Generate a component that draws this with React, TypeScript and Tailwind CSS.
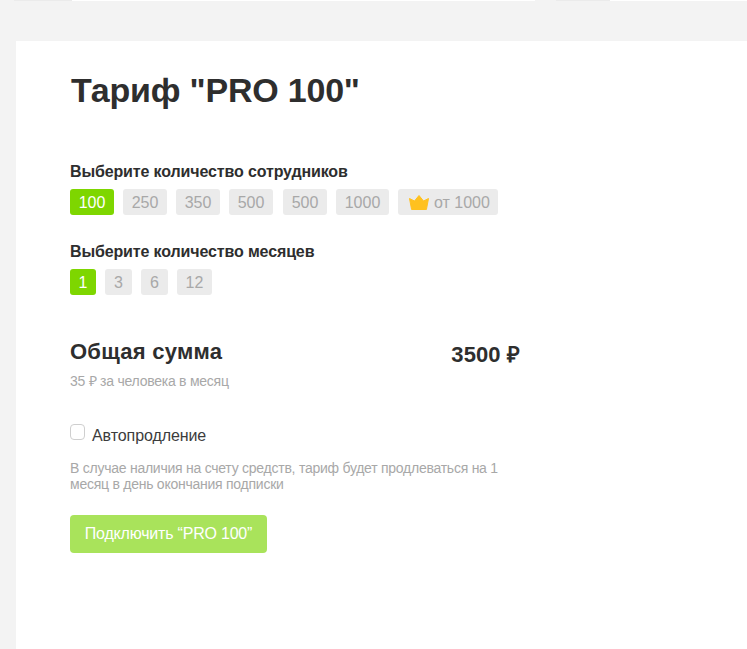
const employees = ['100', '250', '350', '500', '500', '1000'];
const months = ['1', '3', '6', '12'];

function Chip({ label, active, className = '' }: { label: string; active?: boolean; className?: string }) {
  return (
    <div
      className={[
        'h-[26px] flex items-center justify-center rounded-[3px] pt-px text-[16px] leading-none',
        active ? 'bg-[#7ed600] text-white' : 'bg-[#ebebeb] text-[#a8a8a8]',
        className,
      ].join(' ')}
    >
      {label}
    </div>
  );
}

function Crown() {
  return (
    <svg width="20" height="15" viewBox="0 0 20 15" className="shrink-0">
      <path d="M0.5 3.5 L5.5 6 L10 0.5 L14.5 6 L19.5 3.5 L17.5 14 Q17.4 15 16.5 15 L3.5 15 Q2.6 15 2.5 14 Z" fill="#ffc11f" stroke="#ffc11f" strokeWidth="1" strokeLinejoin="round" />
    </svg>
  );
}

export default function App() {
  return (
    <div className="h-[649px] w-[747px] overflow-hidden bg-[#f3f3f3] font-['Liberation_Sans',Arial,sans-serif] text-[#2e2e2e]">
      <div className="flex h-px">
        <div className="w-[14px]" />
        <div className="w-[58px] bg-[#ebebeb]" />
        <div className="w-[463px] bg-white" />
        <div className="w-[21px]" />
        <div className="w-[54px] bg-[#ebebeb]" />
        <div className="flex-1 bg-white" />
      </div>
      <div className="ml-4 mt-10 h-[608px] bg-white pl-[54px] pt-[29px]">
        <h1 className="ml-px text-[34px] font-bold leading-[40px] tracking-[-0.2px]">Тариф "PRO 100"</h1>

        <div className="mt-[52px] text-[16px] font-bold leading-[20px] tracking-[-0.13px]">Выберите количество сотрудников</div>
        <div className="mt-[7px] flex">
          {employees.map((v, i) => (
            <Chip key={i} label={v} active={i === 0} className={`${i === 5 ? 'w-[53px]' : 'w-[44px]'} ${i === 3 ? 'mr-[10px]' : 'mr-[9px]'}`} />
          ))}
          <div className="flex h-[26px] w-[100px] items-center rounded-[3px] bg-[#ebebeb] pl-[11px] pt-px text-[16px] leading-none text-[#a8a8a8]">
            <Crown />
            <span className="ml-[5px]">от 1000</span>
          </div>
        </div>

        <div className="mt-[27px] text-[16px] font-bold leading-[20px] tracking-[-0.13px]">Выберите количество месяцев</div>
        <div className="mt-[7px] flex gap-[9px]">
          {months.map((v, i) => (
            <Chip key={v} label={v} active={i === 0} className={i === 0 ? 'w-[26px]' : i === 3 ? 'w-[35px]' : 'w-[27px]'} />
          ))}
        </div>

        <div className="mt-[44px] flex w-[450px] items-start justify-between">
          <div className="text-[22px] font-bold leading-[26px] tracking-[0.25px]">Общая сумма</div>
          <div className="mt-[3px] text-[22px] font-bold leading-[26px] tracking-[0.1px]">3500 ₽</div>
        </div>
        <div className="mt-[4px] text-[14px] leading-[18px] tracking-[-0.25px] text-[#a8a8a8]">35 ₽ за человека в месяц</div>

        <div className="mt-[34px] flex items-start">
          <div className="h-4 w-[15px] rounded-[4px] border border-[#cfcfcf] bg-white" />
          <span className="ml-[7px] mt-[2px] text-[16px] leading-[20px] tracking-[-0.08px] text-[#3c3c3c]">Автопродление</span>
        </div>

        <p className="mt-[14px] w-[440px] text-[14px] leading-[16px] tracking-[-0.25px] text-[#a8a8a8]">
          В случае наличия на счету средств, тариф будет продлеваться на 1 месяц в день окончания подписки
        </p>

        <div className="mt-[23px] flex h-[38px] w-[197px] items-center justify-center rounded-[4px] bg-[#a9e35b] text-[16px] tracking-[-0.2px] text-white">
          Подключить “PRO 100”
        </div>
      </div>
    </div>
  );
}
